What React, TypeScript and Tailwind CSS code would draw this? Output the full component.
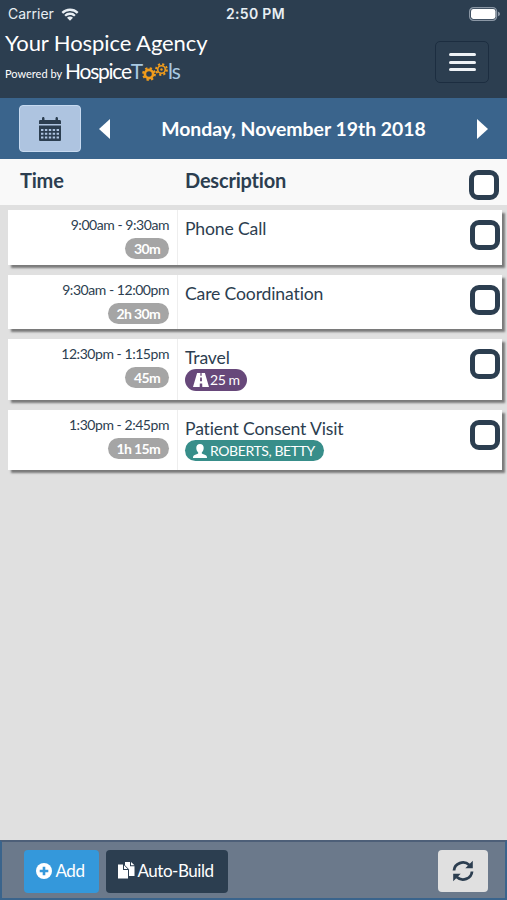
import type { ReactNode } from 'react';

type Entry = {
    time: string;
    duration: string;
    title: string;
    height: string;
    badge?: ReactNode;
};

function WifiIcon() {
    return (
        <svg viewBox="0 0 18 13" className="h-[13px] w-[18px]" fill="currentColor">
            <path d="M9 0.6C5.7 0.6 2.7 1.9 0.5 4l1.6 1.7A10 10 0 0 1 9 3a10 10 0 0 1 6.9 2.7L17.5 4A12.300 12.300 0 0 0 9 .6Z" />
            <path d="M9 4.600A8 8 0 0 0 3.300 6.900l1.600 1.700A5.900 5.900 0 0 1 9 7c1.600 0 3 .6 4.100 1.600l1.600-1.700A8 8 0 0 0 9 4.600Z" />
            <path d="M9 8.500c-1.200 0-2.200.4-3 1.200l3 3 3-3a4.200 4.200 0 0 0-3-1.200Z" />
        </svg>
    );
}

function BatteryIcon() {
    return (
        <svg viewBox="0 0 32 14" className="h-[14px] w-8">
            <rect x="0.600" y="0.600" width="27" height="12.800" rx="4" fill="none" stroke="#8b97a5" strokeWidth="1.200" />
            <rect x="2" y="2" width="24.500" height="10" rx="2.400" fill="#fff" />
            <path d="M29 4.800c1.500.4 2 1.200 2 2.200s-.5 1.800-2 2.200Z" fill="#8b97a5" />
        </svg>
    );
}

function GearIcon({ className, dot }: { className: string; dot?: boolean }) {
    return (
        <svg viewBox="0 0 24 24" className={className} fill="none" stroke="#f09c1c">
            <circle cx="12" cy="12" r="7" strokeWidth={dot ? 3 : 4.5} />
            <circle cx="12" cy="12" r="10" strokeWidth="3.600" strokeDasharray="3.930 3.930" />
            {dot && <circle cx="12" cy="12" r="2.200" fill="#f09c1c" stroke="none" />}
        </svg>
    );
}

function CalendarIcon() {
    return (
        <svg viewBox="0 0 22 24" className="h-6 w-[22px]" fill="#2c3e50">
            <path d="M0 7V4.500C0 3.400.6 3 1.500 3H3V1.500C3 .6 3.400 0 4.300 0s1.200.6 1.200 1.500V3h11V1.500c0-.9.400-1.500 1.200-1.500S19 .6 19 1.500V3h1.500c1 0 1.500.5 1.500 1.500V7Z" />
            <path
                fillRule="evenodd"
                d="M0 8.500h22V22.500c0 1-.5 1.500-1.500 1.500h-19C.5 24 0 23.500 0 22.500Z M2 12v2h2.400v-2Z M5.900 12v2h2.400v-2Z M9.800 12v2h2.400v-2Z M13.700 12v2h2.400v-2Z M17.600 12v2H20v-2Z M2 15.800v2h2.400v-2Z M5.900 15.800v2h2.400v-2Z M9.800 15.800v2h2.400v-2Z M13.700 15.800v2h2.400v-2Z M17.600 15.800v2H20v-2Z M2 19.600v2h2.400v-2Z M5.900 19.600v2h2.400v-2Z M9.800 19.600v2h2.400v-2Z M13.700 19.600v2h2.400v-2Z M17.600 19.600v2H20v-2Z"
            />
        </svg>
    );
}

function RoadIcon() {
    return (
        <svg viewBox="0 0 16 14" className="h-[14px] w-4" fill="#fff">
            <path
                fillRule="evenodd"
                d="M4.100 0h3.300l-.1 2.800h1.400L8.600 0h3.300L16 14H9.300l-.1-3.500H6.800L6.700 14H0Z M7.200 4.600 7 8.300h2l-.2-3.700Z"
            />
        </svg>
    );
}

function UserIcon() {
    return (
        <svg viewBox="0 0 14 14" className="h-[14px] w-[14px]" fill="#fff">
            <path d="M7 0c2.300 0 3.700 1.500 3.700 3.800 0 1.900-.7 3.600-1.900 4.600v1.100c1.200.9 3.500 1.300 4.400 2 .6.500.8 1.300.8 2.500H0c0-1.200.2-2 .8-2.500.9-.7 3.200-1.100 4.400-2V8.400C4 7.400 3.300 5.700 3.300 3.800 3.300 1.500 4.700 0 7 0Z" />
        </svg>
    );
}

function PlusCircleIcon() {
    return (
        <svg viewBox="0 0 16 16" className="h-4 w-4">
            <circle cx="8" cy="8" r="8" fill="#fff" />
            <path d="M6.700 3.700h2.600v3h3v2.600h-3v3H6.700v-3h-3V6.700h3Z" fill="#3498db" />
        </svg>
    );
}

function DuplicateIcon() {
    return (
        <svg viewBox="0 0 17 17" className="h-[17px] w-[17px]" fill="#fff">
            <path d="M7 0h5v4.200h4.500V14h-5.500V8L7 4Z M13 0l3.500 3.300H13Z" />
            <path d="M0 2.500h5V8h5v8.500H0Z M6 2.700 10 7H6Z" />
            <path d="M5.500 2.200 10.500 7.300V14.500" fill="none" stroke="#2c3e50" strokeWidth="0.900" />
        </svg>
    );
}

function RefreshIcon() {
    return (
        <svg viewBox="0 0 22 22" className="h-[22px] w-[22px]">
            <path d="M2 10.500A9 8.500 0 0 1 17.300 5M20 11.500A9 8.500 0 0 1 4.700 17" fill="none" stroke="#2c3e50" strokeWidth="2.800" />
            <path d="M20.800.7v7.500h-7.500Z M1.200 21.300v-7.500h7.500Z" fill="#2c3e50" />
        </svg>
    );
}

function CheckBox() {
    return (
        <button
            aria-label="Select"
            className="block h-[30px] w-[30px] shrink-0 rounded-[9px] border-[5px] border-[#2c3e50] bg-white"
        />
    );
}

const entries: Entry[] = [
    { time: '9:00am - 9:30am', duration: '30m', title: 'Phone Call', height: 'h-[55px]' },
    { time: '9:30am - 12:00pm', duration: '2h 30m', title: 'Care Coordination', height: 'h-[54px]' },
    {
        time: '12:30pm - 1:15pm',
        duration: '45m',
        title: 'Travel',
        height: 'h-[61px]',
        badge: (
            <span className="flex h-[22px] w-[62px] items-center gap-px rounded-full bg-[#67487a] pl-[8px] text-[14px] leading-none tracking-[-0.450px] text-white">
                <RoadIcon />
                25 m
            </span>
        ),
    },
    {
        time: '1:30pm - 2:45pm',
        duration: '1h 15m',
        title: 'Patient Consent Visit',
        height: 'h-[60px]',
        badge: (
            <span className="flex h-[21px] w-[139px] items-center gap-[3px] rounded-full bg-[#388e8a] pl-2 text-[14px] leading-none tracking-[-0.400px] whitespace-nowrap text-white">
                <UserIcon />
                ROBERTS, BETTY
            </span>
        ),
    },
];

function EntryRow({ entry }: { entry: Entry }) {
    return (
        <div className={`flex bg-white shadow-[3px_3px_2px_#7a7a7a] ${entry.height}`}>
            <div className="flex w-[170px] shrink-0 flex-col items-end border-r border-[#eeeeee] pt-[7px] pr-2">
                <span className="text-[14px] leading-4 tracking-[-0.450px]">{entry.time}</span>
                <span className="mt-[5px] flex h-[21px] items-center rounded-full bg-[#a5a5a5] px-[9px] text-[14px] leading-none font-bold tracking-[-0.650px] text-white">
                    {entry.duration}
                </span>
            </div>
            <div className="flex-1 pt-[9px] pl-[7px]">
                <div className="text-[17.600px] leading-5 tracking-[-0.150px]">{entry.title}</div>
                <div className="mt-px">{entry.badge}</div>
            </div>
            <div className="mt-[10px] mr-[2px]">
                <CheckBox />
            </div>
        </div>
    );
}

export default function App() {
    return (
        <div className="flex h-[900px] w-[507px] flex-col overflow-hidden bg-[#e0e0e0] font-['Lato',sans-serif] text-[#2c3e50] [font-variant-ligatures:none]">
            <header className="h-[98px] shrink-0 bg-[#2c3e50] text-white">
                <div className="grid h-7 grid-cols-3 items-center pr-[6px] pl-[8px] font-['Inter',sans-serif] text-[14px] leading-none text-[#e8eef3]">
                    <span className="flex items-center gap-[7px]">
                        Carrier <WifiIcon />
                    </span>
                    <span className="pl-0.5 text-center font-semibold tracking-[0.300px] whitespace-nowrap">2:50 PM</span>
                    <span className="flex justify-end">
                        <BatteryIcon />
                    </span>
                </div>
                <div className="flex justify-between pr-[18px] pl-[5px]">
                    <div>
                        <div className="mt-[3px] text-[22px] leading-6 tracking-[-0.080px]">Your Hospice Agency</div>
                        <div className="mt-1 flex h-6 items-center">
                            <span className="mt-[5px] text-[11px] leading-4">Powered by</span>
                            <span className="ml-[3px] flex items-center text-[21px] leading-6 tracking-[-1.250px]">
                                Hospice<span className="text-[#a9c9e2]">T</span>
                                <GearIcon className="mt-1.5 h-[14px] w-[14px]" />
                                <GearIcon className="-mt-1 -ml-px h-[13px] w-[13px]" dot />
                                <span className="text-[#a9c9e2]">ls</span>
                            </span>
                        </div>
                    </div>
                    <button
                        aria-label="Menu"
                        className="mt-[13px] flex h-[42px] w-[54px] flex-col items-center justify-center gap-[4.500px] rounded-[5px] border border-[#1c2d40]"
                    >
                        <span className="h-[3px] w-[27px] rounded-full bg-[#eef2f6]" />
                        <span className="h-[3px] w-[27px] rounded-full bg-[#eef2f6]" />
                        <span className="h-[3px] w-[27px] rounded-full bg-[#eef2f6]" />
                    </button>
                </div>
            </header>

            <div className="flex h-[61px] shrink-0 items-center bg-[#3a648c] pr-[19px] pl-[19px] text-white">
                <button
                    aria-label="Calendar"
                    className="flex h-[47px] w-[62px] items-center justify-center rounded border border-[#c7daf0] bg-[#aec4e0]"
                >
                    <CalendarIcon />
                </button>
                <svg viewBox="0 0 11 20" className="ml-[18px] h-5 w-[11px]" fill="#fff">
                    <path d="M11 0v20L0 10Z" />
                </svg>
                <div className="flex-1 pt-px text-center text-[19.400px] font-bold">Monday, November 19th 2018</div>
                <svg viewBox="0 0 11 20" className="h-5 w-[11px]" fill="#fff">
                    <path d="M0 0v20l11-10Z" />
                </svg>
            </div>

            <div className="flex h-[46px] shrink-0 bg-[#f9f9f9] pr-2 pl-5 text-[20px] leading-6 font-bold tracking-[-0.200px]">
                <div className="mt-[9px] w-[165px]">Time</div>
                <div className="mt-[9px] flex-1">Description</div>
                <div className="mt-[11px]">
                    <CheckBox />
                </div>
            </div>

            <main className="flex flex-1 flex-col gap-[10px] pt-[5px] pr-[5px] pl-2">
                {entries.map((entry) => (
                    <EntryRow key={entry.title} entry={entry} />
                ))}
            </main>

            <footer className="flex h-[60px] shrink-0 items-start border-2 border-t-[#4d5f78] border-r-[#3a648c] border-b-[#3a648c] border-l-[#3a648c] bg-[#6b798b] pt-2 pr-[17px] pl-[22px] text-[17px] leading-none tracking-[-0.450px] text-white">
                <button className="flex h-[43px] w-[75px] items-center justify-center gap-[3px] rounded bg-[#3498db] pr-0.5 pb-0.5">
                    <PlusCircleIcon />
                    Add
                </button>
                <button className="ml-[7px] flex h-[43px] w-[122px] items-center justify-center gap-0.5 rounded bg-[#2c3e50] pr-0.5 pb-0.5 whitespace-nowrap">
                    <DuplicateIcon />
                    Auto-Build
                </button>
                <button
                    aria-label="Refresh"
                    className="ml-auto flex h-[42px] w-[50px] items-center justify-center rounded bg-[#e0e0e0]"
                >
                    <RefreshIcon />
                </button>
            </footer>
        </div>
    );
}
